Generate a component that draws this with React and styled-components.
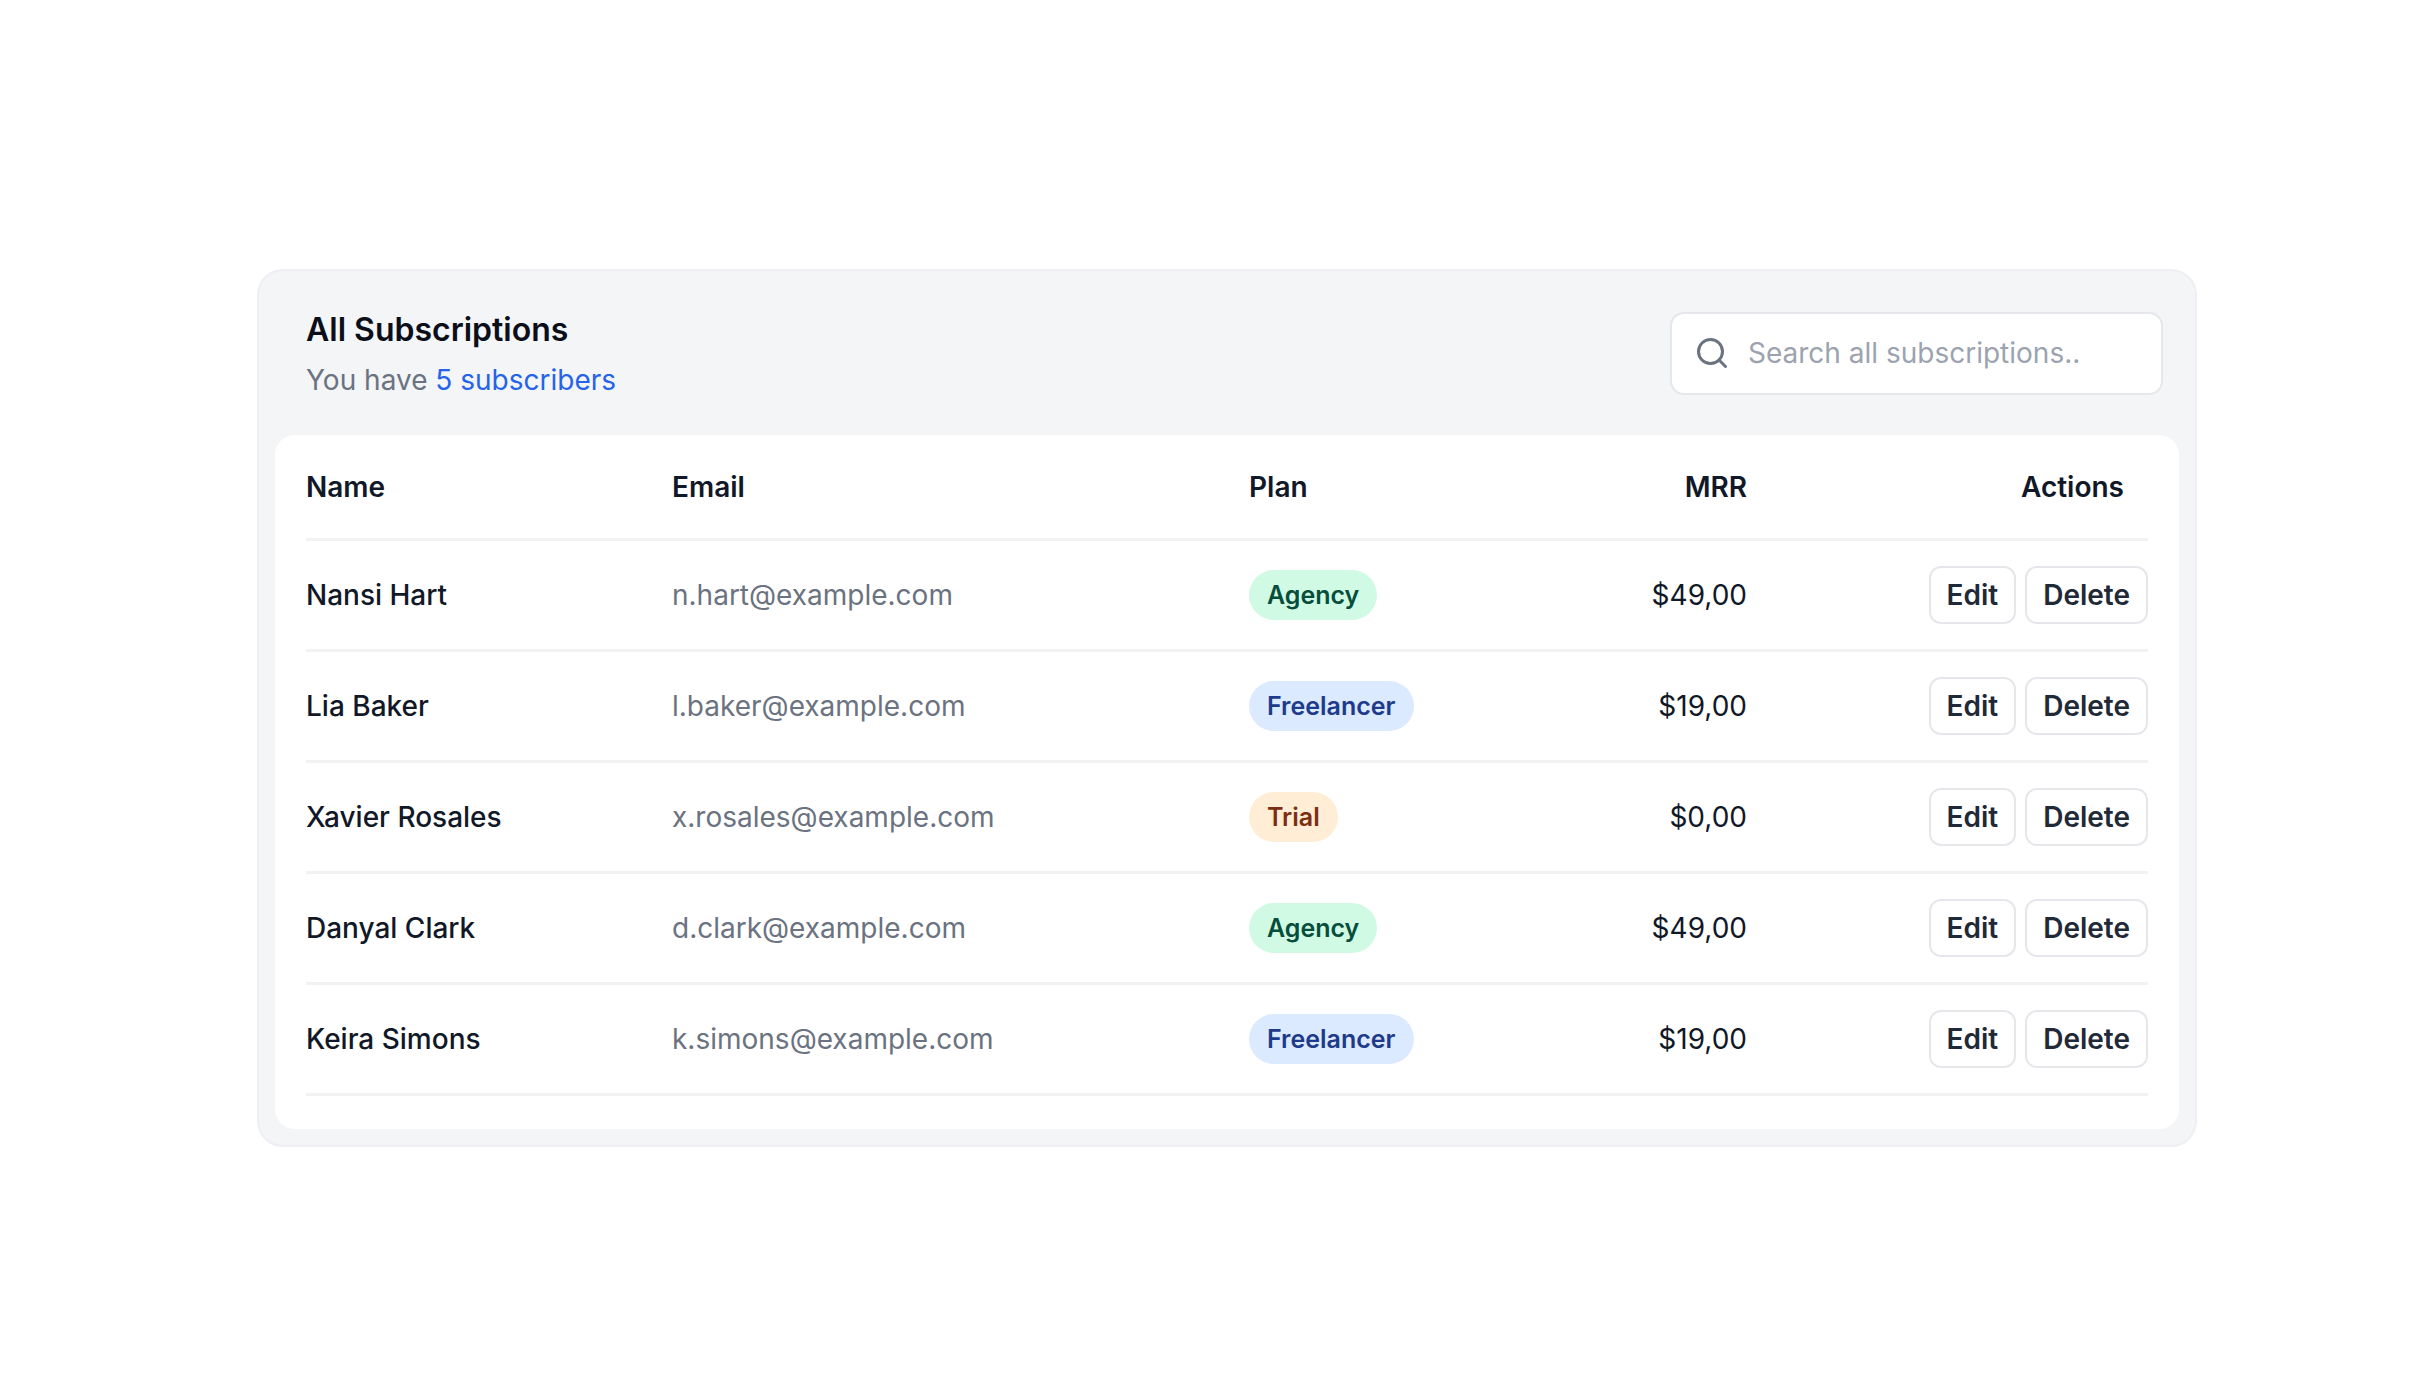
import React from "react";
import styled, { createGlobalStyle } from "styled-components";

const Global = createGlobalStyle`
  body { margin: 0; background: #fff; font-family: Inter, "Noto Sans", sans-serif; color: #111827; }
  * { box-sizing: border-box; }
`;

const Page = styled.div`
  padding: 269px 231px 0 257px;
`;
const Card = styled.div`
  width: 1940px;
  background: #f4f5f7;
  border: 2px solid #eeeff2;
  border-radius: 26px;
  padding: 0 16px 16px;
`;
const Head = styled.div`
  height: 164px;
  display: flex;
  align-items: center;
  justify-content: space-between;
  padding: 0 16px 0 31px;
`;
const Title = styled.h1`
  margin: 0;
  font-size: 32px;
  font-weight: 600;
  color: #0b0f19;
`;
const Sub = styled.p`
  margin: 14px 0 0;
  font-size: 28px;
  color: #6b7280;
  a { color: #2563eb; text-decoration: none; }
`;
const Search = styled.div`
  width: 493px;
  height: 83px;
  border: 2px solid #e5e7eb;
  border-radius: 14px;
  background: #fff;
  display: flex;
  align-items: center;
  gap: 18px;
  padding: 0 22px;
  font-size: 28px;
  color: #9ca3af;
`;
const Panel = styled.div`
  background: #fff;
  border-radius: 20px;
  padding: 0 31px 33px;
`;
const Row = styled.div`
  display: grid;
  grid-template-columns: 366px 577px 320px 178px 1fr;
  align-items: center;
  height: ${p => (p.$header ? 106 : 111)}px;
  border-bottom: 3px solid #f1f2f4;
  font-size: 28px;
  font-weight: ${p => (p.$header ? 600 : 500)};
  color: #111827;
`;
const Email = styled.div`
  color: #6b7280;
  font-weight: 400;
`;
const Money = styled.div`
  text-align: right;
  font-weight: ${p => (p.$header ? 600 : 400)};
`;
const Actions = styled.div`
  display: flex;
  justify-content: flex-end;
  gap: 9px;
  padding-right: ${p => (p.$header ? 24 : 0)}px;
`;
const colors = {
  Agency: ["#d1fae5", "#064e3b"],
  Freelancer: ["#dbeafe", "#1e3a8a"],
  Trial: ["#ffedd5", "#7c2d12"],
};
const Badge = styled.span`
  display: inline-flex;
  align-items: center;
  height: 50px;
  padding: 0 18px;
  border-radius: 25px;
  font-size: 25px;
  font-weight: 600;
  background: ${p => colors[p.$plan][0]};
  color: ${p => colors[p.$plan][1]};
`;
const Btn = styled.button`
  height: 58px;
  padding: 0 16px;
  border: 2px solid #e5e7eb;
  border-radius: 12px;
  background: #fff;
  font-family: inherit;
  font-size: 28px;
  font-weight: 600;
  color: #1f2937;
`;

const data = [
  ["Nansi Hart", "n.hart@example.com", "Agency", "$49,00"],
  ["Lia Baker", "l.baker@example.com", "Freelancer", "$19,00"],
  ["Xavier Rosales", "x.rosales@example.com", "Trial", "$0,00"],
  ["Danyal Clark", "d.clark@example.com", "Agency", "$49,00"],
  ["Keira Simons", "k.simons@example.com", "Freelancer", "$19,00"],
];

export default function App() {
  return (
    <Page>
      <Global />
      <Card>
        <Head>
          <div>
            <Title>All Subscriptions</Title>
            <Sub>You have <a href="#">5 subscribers</a></Sub>
          </div>
          <Search>
            <svg width="36" height="36" viewBox="0 0 24 24" fill="none" stroke="#6b7280" strokeWidth="2" strokeLinecap="round">
              <circle cx="11" cy="11" r="8" />
              <path d="m21 21-4.3-4.3" />
            </svg>
            Search all subscriptions..
          </Search>
        </Head>
        <Panel>
          <Row $header>
            <div>Name</div>
            <div>Email</div>
            <div>Plan</div>
            <Money $header>MRR</Money>
            <Actions $header>Actions</Actions>
          </Row>
          {data.map(r => (
            <Row key={r[0]}>
              <div>{r[0]}</div>
              <Email>{r[1]}</Email>
              <div><Badge $plan={r[2]}>{r[2]}</Badge></div>
              <Money>{r[3]}</Money>
              <Actions>
                <Btn>Edit</Btn>
                <Btn>Delete</Btn>
              </Actions>
            </Row>
          ))}
        </Panel>
      </Card>
    </Page>
  );
}
